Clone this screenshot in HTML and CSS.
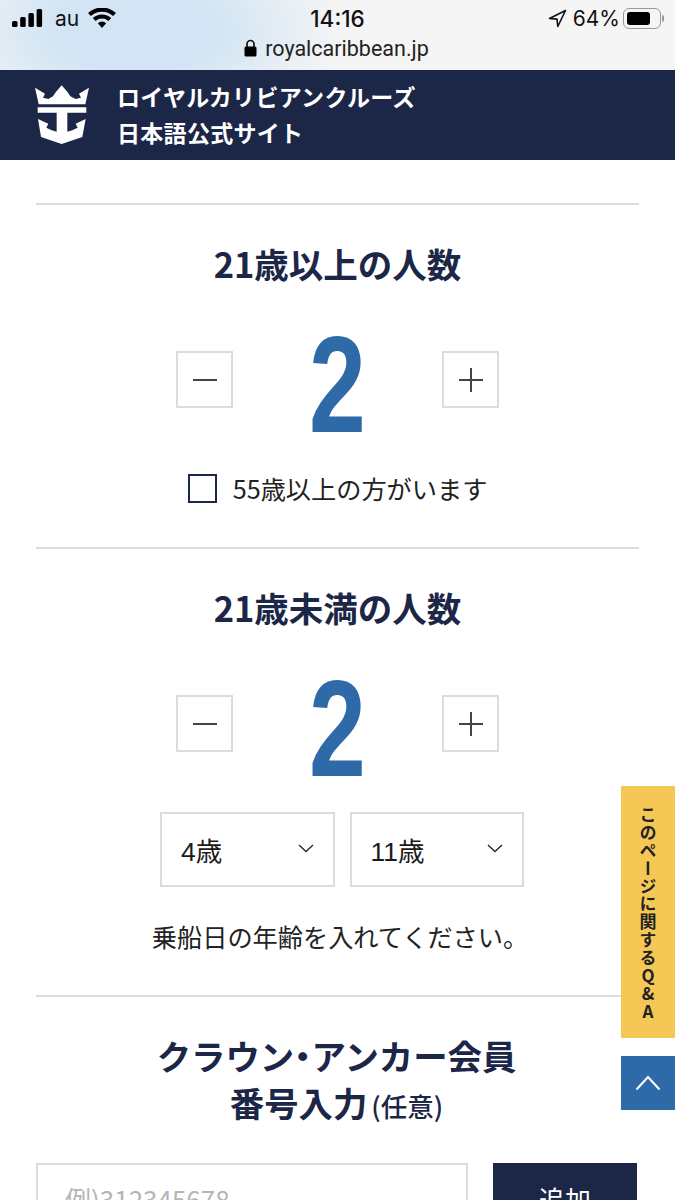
FILE: index.html
```html
<!DOCTYPE html>
<html lang="ja">
  <head>
    <meta charset="UTF-8" />
    <meta name="viewport" content="width=device-width, initial-scale=1.0" />
    <title>royalcaribbean.jp</title>
    <link rel="stylesheet" href="styles.css">
  </head>
  <body>
    <div class="page">
      <div class="status-bar">
        <div class="status-row">
          <div class="status-left">
            <svg class="signal" width="31" height="18" viewBox="0 0 31 18"><rect x="0" y="12" width="5.500" height="6" rx="1.500"/><rect x="8.200" y="8" width="5.500" height="10" rx="1.500"/><rect x="16.400" y="4" width="5.500" height="14" rx="1.500"/><rect x="24.600" y="0" width="5.500" height="18" rx="1.500"/></svg>
            <span class="carrier">au</span>
            <svg class="wifi" width="28" height="20" viewBox="0 0 28 20"><path d="M14 20l-4.200-4.700a6 6 0 0 1 8.400 0zM7.600 13L4.800 10a13.500 13.500 0 0 1 18.400 0l-2.800 3a9.500 9.500 0 0 0-12.800 0zM2.900 8L0 5a20.500 20.500 0 0 1 28 0l-2.900 3a16.300 16.300 0 0 0-22.200 0z"/></svg>
          </div>
          <div class="status-time">14:16</div>
          <div class="status-right">
            <svg class="location" width="19" height="19" viewBox="0 0 19 19"><path d="M17.500 1.500L1.500 9.500l7.500.6.800 7.400z" fill="none" stroke="#111" stroke-width="1.600" stroke-linejoin="round"/></svg>
            <span class="battery-text">64%</span>
            <div class="battery"><div class="battery-level"></div></div>
            <div class="battery-cap"></div>
          </div>
        </div>
        <div class="url-row">
          <svg width="13" height="18" viewBox="0 0 13 18"><path d="M3 8V5a3.500 3.500 0 0 1 7 0v3" fill="none" stroke="#111" stroke-width="1.700"/><rect x="0.500" y="7.500" width="12" height="10" rx="1.500"/></svg>
          <span>royalcaribbean.jp</span>
        </div>
      </div>

      <header class="site-header">
        <svg class="logo" width="55" height="60" viewBox="48 30 165 180"><path fill="#fff" d="M48 38L78 56 72 68 88 72 102 64 110 52 128 31 146 52 154 64 170 72 186 68 180 56 210 38 199 88H59z"/><path fill="#fff" d="M56 97H202V113H145V170L160 166 176 158 170 146 200 132 190 186 128 207 66 186 57 132 88 146 82 158 98 166 113 170V113H56z"/></svg>
        <div class="site-title">
          <div>ロイヤルカリビアンクルーズ</div>
          <div>日本語公式サイト</div>
        </div>
      </header>

      <main class="content">
        <section class="block block-adult">
          <h2 class="block-title">21歳以上の人数</h2>
          <div class="counter">
            <button class="count-btn">
              <span class="icon-minus"></span>
            </button>
            <div class="count-value">2</div>
            <button class="count-btn">
              <span class="icon-plus"></span>
            </button>
          </div>
          <label class="senior-check">
            <span class="checkbox"></span>
            <span>55歳以上の方がいます</span>
          </label>
        </section>

        <section class="block block-child">
          <h2 class="block-title">21歳未満の人数</h2>
          <div class="counter">
            <button class="count-btn">
              <span class="icon-minus"></span>
            </button>
            <div class="count-value">2</div>
            <button class="count-btn">
              <span class="icon-plus"></span>
            </button>
          </div>
          <div class="age-selects">
            <div class="age-select">
              <span>4歳</span>
              <svg width="16" height="9" viewBox="0 0 16 9"><path d="M1 1l7 6.500L15 1" fill="none" stroke="#1c2647" stroke-width="1.300"/></svg>
            </div>
            <div class="age-select">
              <span>11歳</span>
              <svg width="16" height="9" viewBox="0 0 16 9"><path d="M1 1l7 6.500L15 1" fill="none" stroke="#1c2647" stroke-width="1.300"/></svg>
            </div>
          </div>
          <p class="age-note">乗船日の年齢を入れてください。</p>
        </section>

        <section class="block block-member">
          <h2 class="member-title">クラウン<span class="member-dot">・</span>アンカー会員<br>番号入力<small>(任意)</small></h2>
          <div class="member-form">
            <div class="member-input">例)312345678</div>
            <button class="member-add">追加</button>
          </div>
        </section>
      </main>

      <a class="qa-tab">このページに関するQ&amp;A</a>
      <a class="top-btn">
        <svg width="26" height="16" viewBox="0 0 26 16"><path d="M1.500 14.500L13 2l11.500 12.500" fill="none" stroke="#fff" stroke-width="2"/></svg>
      </a>
    </div>
  </body>
</html>
```

FILE: styles.css
```css
* {
  box-sizing: border-box;
}
html,
body {
  margin: 0;
  padding: 0;
}
.page {
  position: relative;
  width: 675px;
  height: 1200px;
  overflow: hidden;
  background: #fff;
  font-family: "Noto Sans CJK JP", "Noto Sans", sans-serif;
  color: #1a1a1a;
}

/* status bar */
.status-bar {
  height: 70px;
  padding: 0 10px 0 12px;
  background: radial-gradient(ellipse 210px 110px at 135px 30px, #d3e5f4 40%, rgba(211, 229, 244, 0) 100%), #f5f5f5;
  color: #111;
  font-family: Inter, Roboto, sans-serif;
}
.status-row {
  display: flex;
  align-items: center;
  justify-content: space-between;
  height: 36px;
}
.status-left {
  display: flex;
  align-items: center;
  width: 200px;
}
.carrier {
  margin: 0 9px 0 12px;
  font-size: 21px;
}
.status-time {
  font-size: 22.500px;
  font-weight: 500;
  margin-right: 2px;
}
.status-right {
  display: flex;
  align-items: center;
  justify-content: flex-end;
  width: 200px;
  padding-right: 1px;
}
.location {
  margin-right: 6px;
}
.battery-text {
  font-size: 21px;
  margin-right: 3px;
}
.battery {
  width: 38px;
  height: 21px;
  padding: 3px;
  border: 1.500px solid #999;
  border-radius: 6px;
}
.battery-level {
  width: 23px;
  height: 100%;
  border-radius: 3px;
  background: #000;
}
.battery-cap {
  width: 2px;
  height: 7px;
  margin-left: 1px;
  border-radius: 0 2px 2px 0;
  background: #999;
}
.url-row {
  display: flex;
  align-items: center;
  justify-content: center;
  gap: 8px;
  height: 24px;
  padding-right: 4px;
  font-family: Roboto, sans-serif;
  font-size: 21.500px;
  color: #222;
}

/* site header */
.site-header {
  display: flex;
  align-items: center;
  gap: 27px;
  height: 90px;
  padding: 0 35px;
  background: #1c2647;
}
.site-title {
  padding-bottom: 3px;
  font-size: 23px;
  font-weight: 700;
  line-height: 36px;
  letter-spacing: 0.3px;
  color: #fff;
}

/* content */
.content {
  padding: 43px 36px 0;
}
.block {
  border-top: 2px solid #dcdcdc;
}
.block-adult {
  height: 344px;
}
.block-child {
  height: 448px;
}
.block-title {
  margin: 0;
  padding-top: 35px;
  font-size: 34.500px;
  font-weight: 700;
  line-height: 46px;
  text-align: center;
  color: #1c2647;
}
.counter {
  display: flex;
  align-items: center;
  justify-content: space-between;
  width: 323px;
  height: 57px;
  margin: 65px 0 0 140px;
}
.count-btn {
  display: flex;
  align-items: center;
  justify-content: center;
  width: 57px;
  height: 57px;
  padding: 0;
  border: 2px solid #dcdcdc;
  background: #fff;
}
.icon-minus {
  width: 24px;
  height: 2px;
  background: #444;
}
.icon-plus {
  position: relative;
  width: 24px;
  height: 2px;
  background: #444;
}
.icon-plus::after {
  content: "";
  position: absolute;
  left: 11px;
  top: -11px;
  width: 2px;
  height: 24px;
  background: #444;
}
.count-value {
  margin-top: 10px;
  font-family: "Liberation Sans", sans-serif;
  font-size: 138px;
  font-weight: 700;
  line-height: 57px;
  color: #2f6aa8;
  transform: scaleX(0.74);
}
.senior-check {
  display: flex;
  align-items: center;
  justify-content: center;
  gap: 16px;
  margin-top: 60px;
  font-size: 25.200px;
  line-height: 40px;
  color: #222;
}
.checkbox {
  width: 29px;
  height: 29px;
  border: 2px solid #1c2647;
}
.age-selects {
  display: flex;
  gap: 15px;
  margin: 60px 0 0 124px;
}
.age-select {
  display: flex;
  align-items: center;
  justify-content: space-between;
  width: 174.500px;
  height: 75px;
  padding: 0 19px;
  border: 2px solid #dcdcdc;
  font-family: "Liberation Sans", "Noto Sans CJK JP", sans-serif;
  font-size: 26.500px;
}
.age-select svg {
  margin-top: -3px;
}
.age-note {
  margin: 29px 0 0;
  padding-left: 5px;
  font-size: 25.200px;
  line-height: 40px;
  text-align: center;
  color: #222;
}
.member-title {
  margin: 0;
  padding: 35px 2px 0 0;
  font-size: 34.400px;
  font-weight: 700;
  line-height: 47px;
  text-align: center;
  color: #1c2647;
}
.member-dot {
  font-feature-settings: "palt";
}
.member-title small {
  margin-left: 4px;
  font-size: 26.500px;
  font-weight: 500;
  line-height: 1;
}
.member-form {
  display: flex;
  justify-content: space-between;
  margin-top: 37px;
  padding-right: 2px;
}
.member-input {
  width: 432px;
  height: 70px;
  padding: 14px 27px;
  border: 2px solid #dcdcdc;
  font-size: 26px;
  line-height: 40px;
  color: #b5b5b5;
}
.member-add {
  width: 144px;
  height: 70px;
  border: 0;
  background: #1c2647;
  color: #fff;
  font-family: inherit;
  font-size: 26px;
}

/* side tabs */
.qa-tab {
  position: absolute;
  right: 0;
  top: 786px;
  display: flex;
  align-items: center;
  justify-content: center;
  width: 54px;
  height: 252px;
  padding-top: 3px;
  background: #f5c755;
  writing-mode: vertical-rl;
  text-orientation: upright;
  font-size: 17px;
  font-weight: 700;
  letter-spacing: 0.900px;
  color: #222;
}
.top-btn {
  position: absolute;
  right: 0;
  top: 1056px;
  display: flex;
  align-items: center;
  justify-content: center;
  width: 54px;
  height: 54px;
  background: #2f6aa8;
}
```
